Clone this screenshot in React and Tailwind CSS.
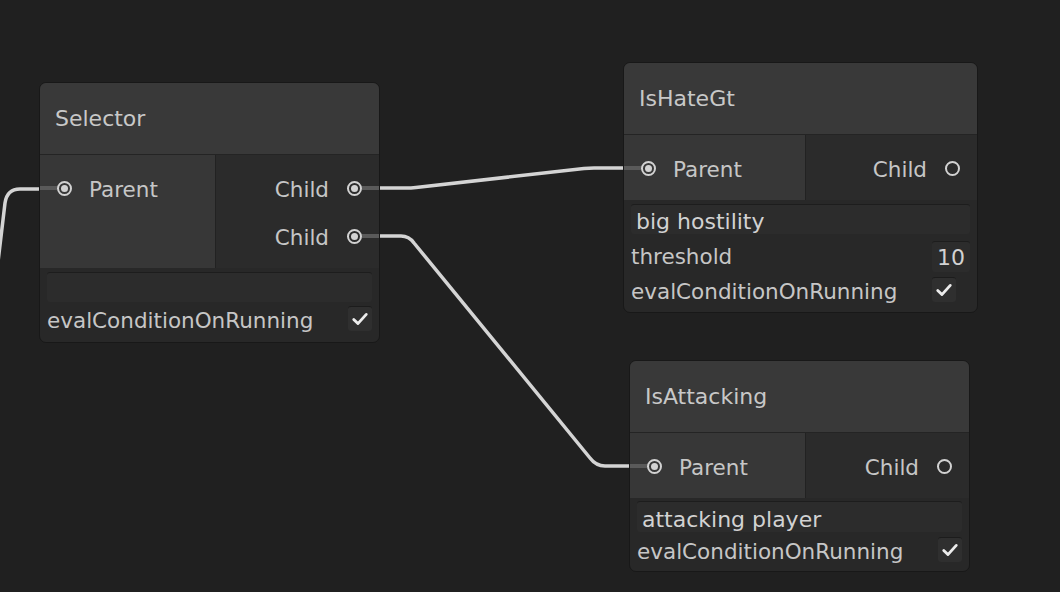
import React from "react";

const FONT = "font-['DejaVu_Sans',sans-serif]";

function Port({ side, linked }) {
  // ring with a dot when the port has a wire, bare ring otherwise
  const ring = (
    <div className="flex h-[15px] w-[15px] shrink-0 items-center justify-center rounded-full border-2 border-[#d2d2d2]">
      {linked && <div className="h-[7px] w-[7px] rounded-full bg-[#d2d2d2]" />}
    </div>
  );
  const stub = (
    <div className={`h-[4px] w-[17px] shrink-0 ${linked ? "bg-[#5a5a5a]" : ""}`} />
  );
  return side === "in" ? (
    <>
      {stub}
      {ring}
    </>
  ) : (
    <>
      {ring}
      {stub}
    </>
  );
}

function Check() {
  return (
    <div className="flex h-[25px] w-[24px] items-center justify-center rounded-[3px] border-t border-[#1c1c1c] bg-[#2f2f2f]">
      <svg width="20" height="20" viewBox="0 0 24 24" fill="none">
        <path d="M4.5 12.5 L9.5 17.5 L19.5 6.5" stroke="#ececec" strokeWidth="3.4" strokeLinecap="round" strokeLinejoin="round" />
      </svg>
    </div>
  );
}

function Node({ pos, title, inW, outs, children }) {
  return (
    <div className={`absolute ${pos} flex flex-col overflow-hidden rounded-[7px] border border-[#181818] bg-[#282828] text-[#c6c6c6] ${FONT}`}>
      <div className="flex h-[72px] shrink-0 items-center border-b border-[#242424] bg-[#393939] pl-[15px] text-[22px] text-[#c8c8c8]">
        {title}
      </div>
      <div className="flex text-[21.5px]">
        <div className={`${inW} shrink-0 border-r border-[#222222] bg-[#373737] pb-[8px] pt-[9px]`}>
          <div className="flex h-[48px] items-center">
            <Port side="in" linked />
            <span className="ml-[17px] translate-y-[2px]">Parent</span>
          </div>
        </div>
        <div className="flex-1 bg-[#2b2b2b] pb-[8px] pt-[9px]">
          {outs.map((linked, i) => (
            <div key={i} className="flex h-[48px] items-center justify-end">
              <span className="mr-[18px] translate-y-[2px]">Child</span>
              <Port side="out" linked={linked} />
            </div>
          ))}
        </div>
      </div>
      <div className="flex flex-col px-[7px] text-[21.5px]">{children}</div>
    </div>
  );
}

function Field({ text, cls }) {
  return (
    <div className={`flex items-center rounded-[3px] border-t border-[#1d1d1d] bg-[#2c2c2c] pl-[5px] text-[22px] text-[#d2d2d2] ${cls}`}>
      <span className="translate-y-[2px]">{text}</span>
    </div>
  );
}

export default function App() {
  return (
    <div className="relative h-[592px] w-[1060px] overflow-hidden bg-[#202020]">
      <svg className="absolute inset-0" width="1060" height="592" fill="none">
        <g stroke="#d4d4d4" strokeWidth="3.5" strokeLinejoin="round">
          <path d="M -2 262 L 5 203 Q 7 189 20 189 L 40 189" />
          <path d="M 378 188 L 406 188 Q 411 188 416 187.4 L 584 168.6 Q 589 168 594 168 L 624 168" />
          <path d="M 378 236 L 401 236 Q 409 236 414 243 L 590 458 Q 596 466 605 466 L 630 466" />
        </g>
      </svg>

      <Node pos="left-[39px] top-[82px] w-[341px]" title="Selector" inW="w-[176px]" outs={[true, true]}>
        <Field cls="mt-[4px] h-[30px]" />
        <div className="flex h-[33px] items-center justify-between">
          <span className="translate-y-[3px]">evalConditionOnRunning</span>
          <Check />
        </div>
        <div className="h-[7px]" />
      </Node>

      <Node pos="left-[623px] top-[62px] w-[355px]" title="IsHateGt" inW="w-[182px]" outs={[false]}>
        <Field text="big hostility" cls="mt-[4px] h-[30px]" />
        <div className="flex h-[38px] items-center justify-between">
          <span className="translate-y-[4px]">threshold</span>
          <div className="mt-[6px] flex h-[31px] w-[38px] items-center justify-center rounded-[3px] border-t border-[#1d1d1d] bg-[#2c2c2c] text-[22px] text-[#d2d2d2]">
            <span className="translate-y-[1px]">10</span>
          </div>
        </div>
        <div className="flex h-[34px] items-center justify-between">
          <span className="translate-y-[3px]">evalConditionOnRunning</span>
          <div className="mr-[14px]">
            <Check />
          </div>
        </div>
        <div className="h-[6px]" />
      </Node>

      <Node pos="left-[629px] top-[360px] w-[341px]" title="IsAttacking" inW="w-[176px]" outs={[false]}>
        <Field text="attacking player" cls="mt-[3px] h-[31px]" />
        <div className="flex h-[34px] items-center justify-between">
          <span className="translate-y-[3px]">evalConditionOnRunning</span>
          <Check />
        </div>
        <div className="h-[5px]" />
      </Node>
    </div>
  );
}
